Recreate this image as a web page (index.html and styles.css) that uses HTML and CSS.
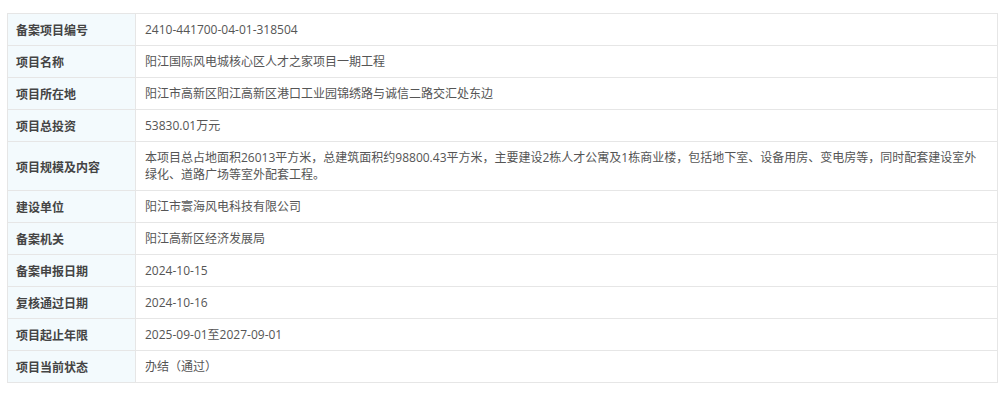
FILE: index.html
```html
<!DOCTYPE html>
<html lang="zh-CN">
<head>
  <meta charset="UTF-8" />
  <meta name="viewport" content="width=device-width, initial-scale=1.0" />
  <title>项目备案信息</title>
  <link rel="stylesheet" href="styles.css">
</head>
<body>

  <div class="detail-wrap">
    <table class="detail-table">
      <tbody>
        <tr>
          <th>备案项目编号</th>
          <td>2410-441700-04-01-318504</td>
        </tr>
        <tr>
          <th>项目名称</th>
          <td>阳江国际风电城核心区人才之家项目一期工程</td>
        </tr>
        <tr>
          <th>项目所在地</th>
          <td>阳江市高新区阳江高新区港口工业园锦绣路与诚信二路交汇处东边</td>
        </tr>
        <tr>
          <th>项目总投资</th>
          <td>53830.01万元</td>
        </tr>
        <tr>
          <th>项目规模及内容</th>
          <td>本项目总占地面积26013平方米，总建筑面积约98800.43平方米，主要建设2栋人才公寓及1栋商业楼，包括地下室、设备用房、变电房等，同时配套建设室外绿化、道路广场等室外配套工程。</td>
        </tr>
        <tr>
          <th>建设单位</th>
          <td>阳江市寰海风电科技有限公司</td>
        </tr>
        <tr>
          <th>备案机关</th>
          <td>阳江高新区经济发展局</td>
        </tr>
        <tr>
          <th>备案申报日期</th>
          <td>2024-10-15</td>
        </tr>
        <tr>
          <th>复核通过日期</th>
          <td>2024-10-16</td>
        </tr>
        <tr>
          <th>项目起止年限</th>
          <td>2025-09-01至2027-09-01</td>
        </tr>
        <tr>
          <th>项目当前状态</th>
          <td>办结（通过）</td>
        </tr>
      </tbody>
    </table>
  </div>

</body>
</html>
```

FILE: styles.css
```css
body {
  margin: 0;
  font-family: "Open Sans", "Noto Sans CJK SC", sans-serif;
  font-size: 12px;
  color: #555;
  background: #fff;
}

.detail-wrap {
  padding: 13px 2px 0 7px;
}

.detail-table {
  width: 100%;
  border-collapse: collapse;
  table-layout: fixed;
}

.detail-table th,
.detail-table td {
  border: 1px solid #e6e6e6;
  padding: 7px 10px 7px 9px;
  line-height: 17px;
  text-align: left;
  vertical-align: middle;
}

.detail-table th {
  width: 111px;
  padding-left: 8px;
  padding-right: 8px;
  background-color: #f3fafd;
  color: #444;
  font-family: "Noto Sans CJK SC", sans-serif;
  font-weight: bold;
}
```
